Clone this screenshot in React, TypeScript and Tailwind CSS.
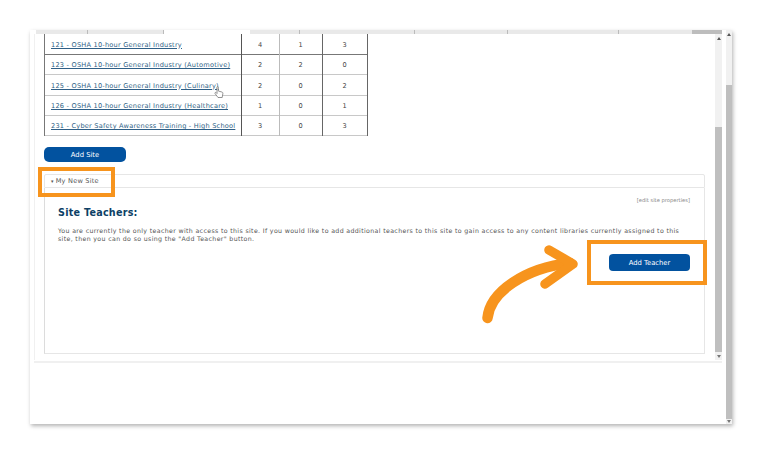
import React from 'react';

const ROWS = [
  { name: '121 - OSHA 10-hour General Industry', a: 4, b: 1, c: 3 },
  { name: '123 - OSHA 10-hour General Industry (Automotive)', a: 2, b: 2, c: 0 },
  { name: '125 - OSHA 10-hour General Industry (Culinary)', a: 2, b: 0, c: 2 },
  { name: '126 - OSHA 10-hour General Industry (Healthcare)', a: 1, b: 0, c: 1 },
  { name: '231 - Cyber Safety Awareness Training - High School', a: 3, b: 0, c: 3 },
];

const FONT = 'font-["DejaVu_Sans",sans-serif]';

function Scrollbar({ width, thumbTop, thumbBottom }: { width: string; thumbTop: string; thumbBottom: string }) {
  return (
    <div className={`${width} h-full flex flex-col bg-[#f1f1f1]`}>
      <div className={`${thumbTop} flex justify-center pt-[3px] shrink-0`}>
        <svg width="4" height="3" viewBox="0 0 4 3"><path d="M2 0 L4 3 L0 3 Z" fill="#555" /></svg>
      </div>
      <div className="flex-1 bg-[#bfbfbf]" />
      <div className={`${thumbBottom} flex justify-center items-center shrink-0`}>
        <svg width="4" height="3" viewBox="0 0 4 3"><path d="M0 0 L4 0 L2 3 Z" fill="#777" /></svg>
      </div>
    </div>
  );
}

export default function App() {
  return (
    <div className={`relative w-[760px] h-[454px] bg-white overflow-hidden pt-[30px] pl-[30px] ${FONT}`}>
      {/* window */}
      <div className="w-[702px] h-[394px] flex shadow-[1px_2px_4px_rgba(0,0,0,0.3)] bg-white">
        <div className="flex-1 flex flex-col min-w-0">
          {/* cut off tab strip */}
          <div className="h-[4px] flex pl-[6px] pr-[4px] shrink-0">
            <div className="w-[52px] bg-[#e9e9e9] border-r border-[#bbb]" />
            <div className="w-[76px] bg-[#e9e9e9] border-r border-[#bbb]" />
            <div className="w-[86px] bg-white" />
            <div className="w-[50px] bg-[#e9e9e9] border-r border-[#bbb]" />
            <div className="w-[115px] bg-[#e9e9e9] border-r border-[#bbb]" />
            <div className="w-[93px] bg-[#e9e9e9] border-r border-[#bbb]" />
            <div className="w-[111px] bg-[#e9e9e9] border-r border-[#bbb]" />
            <div className="flex-1 bg-[#e9e9e9]" />
            <div className="w-[30px] bg-[#bdbdbd]" />
          </div>

          <div className="h-[326px] flex shrink-0 pr-[4px]">
            <div className="flex-1 ml-[4px] border-l border-[#f0f0f0] pl-[9px] pr-[9px] min-w-0">
              {/* courses table */}
              <table className="w-[323px] table-fixed border-collapse text-[6.6px] text-[#444] border-b border-[#aaa]">
                <colgroup>
                  <col className="w-[197px]" />
                  <col className="w-[38px]" />
                  <col className="w-[43px]" />
                  <col className="w-[45px]" />
                </colgroup>
                <tbody>
                  {ROWS.map((r, i) => (
                    <tr key={r.name} className={`h-[20.4px] ${i === 0 ? 'border-b border-[#777]' : 'border-b border-[#c8c8c8]'}`}>
                      <td className="border-l border-[#777] pl-[6px] pt-[3px] whitespace-nowrap tracking-[0.22px]">
                        <span className="text-[#2f5f86] underline">{r.name}</span>
                      </td>
                      <td className="border-l border-[#555] pt-[3px] pr-[1px] text-center">{r.a}</td>
                      <td className="border-l border-[#bbb] pt-[3px] pr-[1px] text-center">{r.b}</td>
                      <td className="border-l border-r border-[#666] pt-[3px] pr-[1px] text-center">{r.c}</td>
                    </tr>
                  ))}
                </tbody>
              </table>

              <button className="mt-[11px] w-[82px] h-[15px] rounded-[5px] bg-[#02529f] text-white text-[6.8px] flex items-center justify-center">
                Add Site
              </button>

              {/* site accordion */}
              <div className="mt-[12px] w-[661px] h-[180px] flex flex-col">
                <div className="h-[14px] border border-[#e6e6e6] rounded-t-[2px] flex items-center pl-[6px] pt-[1px] text-[6.6px] tracking-[0.2px] text-[#555] shrink-0">
                  <span className="text-[5px] mr-[2px]">▾</span>My New Site
                </div>
                <div className="h-[166px] border border-t-0 border-[#e6e6e6] border-l-[#dcdcdc] pl-[13px] pr-[14px] pt-[9px]">
                  <div className="text-right text-[5.2px] text-[#888] leading-[6px]">[edit site properties]</div>
                  <h2 className="mt-[4px] text-[9.6px] leading-[12px] font-bold tracking-[0.25px] text-[#0d3f66]">Site Teachers:</h2>
                  <p className="mt-[8px] w-[628px] text-[6.25px] leading-[8px] tracking-[0.35px] text-[#555]">
                    You are currently the only teacher with access to this site. If you would like to add additional teachers to this site to gain access to any content libraries currently assigned to this site, then you can do so using the "Add Teacher" button.
                  </p>
                  <div className="mt-[11px] flex justify-end">
                    <button className="w-[81px] h-[17px] rounded-[4px] bg-[#02529f] text-white text-[6.8px] flex items-center justify-center">
                      Add Teacher
                    </button>
                  </div>
                </div>
              </div>
            </div>
            <Scrollbar width="w-[7px]" thumbTop="h-[93px]" thumbBottom="h-[8px]" />
          </div>
          <div className="mt-[1px] h-[2px] w-[688px] ml-[4px] bg-[#f0f0f0] shrink-0" />
        </div>
        <Scrollbar width="w-[6px]" thumbTop="h-[55px]" thumbBottom="h-[5px]" />
      </div>

      {/* hand cursor */}
      <svg className="absolute left-[214px] top-[86px]" width="10" height="13" viewBox="0 0 10 13">
        <path d="M3 1.2 C3 0.3 4.3 0.3 4.3 1.2 V5 L7.8 6 C8.8 6.3 9 7 8.8 8 L8.2 11.5 H4 L1 7.5 C0.6 6.8 1.5 6 2.2 6.7 L3 7.5 Z" fill="#fff" stroke="#777" strokeWidth="0.8" />
      </svg>

      {/* orange callouts */}
      <div className="absolute left-[38px] top-[167px] w-[77px] h-[30px] border-[4px] border-[#f7941d]" />
      <div className="absolute left-[587px] top-[240px] w-[120px] h-[45px] border-[4px] border-[#f7941d]" />
      <svg className="absolute left-[478px] top-[240px]" width="110" height="90" viewBox="478 240 110 90" fill="none" stroke="#f7941d" strokeLinecap="round" strokeLinejoin="round">
        <path d="M487.5 318 C490 292 525 268 570 263" strokeWidth="10.5" />
        <path d="M549 250 L573 264 L545 284" strokeWidth="9.5" />
      </svg>
    </div>
  );
}
